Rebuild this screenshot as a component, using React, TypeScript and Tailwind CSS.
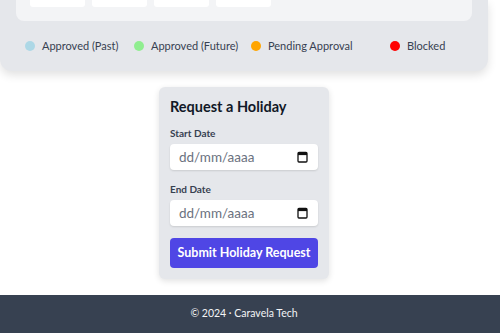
import React from "react";

const font = { fontFamily: "Lato, 'Noto Sans', sans-serif" };

function Cal() {
  return (
    <svg width="11" height="12" viewBox="0 0 11 12" className="shrink-0">
      <rect x="1" y="1.5" width="9" height="9.5" rx="1" fill="none" stroke="#111" strokeWidth="1.3" />
      <rect x="1" y="1.5" width="9" height="2.6" fill="#111" />
    </svg>
  );
}

function DateField({ label, mt }: { label: string; mt: string }) {
  return (
    <div className={`flex flex-col ${mt}`}>
      <div className="text-[10px] font-bold text-[#374151] leading-[14px]">{label}</div>
      <div className="mt-[4px] h-[26px] bg-white rounded-[4px] shadow-[0_1px_2px_rgba(0,0,0,0.12)] flex items-center justify-between pl-[9px] pr-[10px]">
        <span className="text-[13.5px] text-[#6b7280]">dd/mm/aaaa</span>
        <Cal />
      </div>
    </div>
  );
}

export default function App() {
  const legend = [
    { c: "#add8e6", t: "Approved (Past)", w: "w-[109px]" },
    { c: "#90ee90", t: "Approved (Future)", w: "w-[117px]" },
    { c: "#ffa500", t: "Pending Approval", w: "w-[139px]" },
    { c: "#ff0000", t: "Blocked", w: "" },
  ];
  return (
    <div className="w-[500px] h-[333px] bg-white flex flex-col overflow-hidden" style={font}>
      <div className="w-[488px] bg-[#e5e7eb] rounded-b-[12px] shadow-[0_4px_10px_rgba(0,0,0,0.12)] px-4 pb-4">
        <div className="bg-[#f3f4f6] rounded-b-[8px] px-[14px] pb-[14px] flex gap-[7px]">
          {[0, 1, 2, 3].map((i) => (
            <div key={i} className="w-[55px] h-[7px] bg-white rounded-b-[3px]" />
          ))}
        </div>
        <div className="flex items-center pl-[9px] mt-[16px] h-[18px]">
          {legend.map((l) => (
            <div key={l.t} className={`flex items-center shrink-0 ${l.w}`}>
              <span className="w-[10px] h-[10px] rounded-full shrink-0" style={{ background: l.c }} />
              <span className="ml-[7px] text-[11px] text-[#374151] whitespace-nowrap">{l.t}</span>
            </div>
          ))}
        </div>
      </div>

      <div className="w-[488px] flex justify-center mt-4">
        <div className="w-[170px] bg-[#e5e7eb] rounded-[6px] shadow-[0_2px_6px_rgba(0,0,0,0.12)] px-[11px] pt-[10px] pb-[11px] flex flex-col">
          <div className="text-[14.5px] font-bold text-[#111827] leading-[20px] whitespace-nowrap">Request a Holiday</div>
          <DateField label="Start Date" mt="mt-[9px]" />
          <DateField label="End Date" mt="mt-[12px]" />
          <button className="mt-[12px] h-[30px] rounded-[4px] bg-[#4f46e5] text-white text-[12.5px] font-bold whitespace-nowrap">
            Submit Holiday Request
          </button>
        </div>
      </div>

      <div className="mt-4 flex-1 bg-[#374151]">
        <div className="w-[488px] h-full flex items-center justify-center">
          <span className="text-[10.5px] text-[#f3f4f6]">© 2024 · Caravela Tech</span>
        </div>
      </div>
    </div>
  );
}
